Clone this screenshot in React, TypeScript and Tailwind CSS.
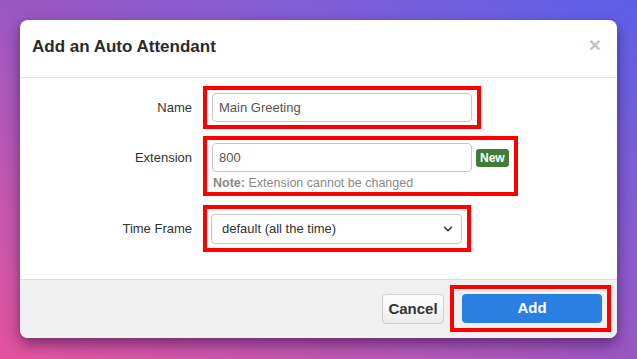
import { ChevronDown } from 'lucide-react'

const font = { fontFamily: '"Liberation Sans", Arial, sans-serif' }

export default function App() {
  return (
    <div
      className="w-full h-[359px] p-[20px] bg-gradient-to-tr from-[#e4529c] via-[#9a57c2] to-[#5a60ea]"
      style={font}
    >
      <div className="w-[597px] h-[318px] bg-white rounded-[8px] shadow-[0_6px_14px_rgba(40,10,60,0.55)] overflow-hidden flex flex-col">
        {/* header */}
        <div className="h-[58px] flex items-center justify-between pl-[12px] pr-[16px] border-b border-[#e5e5e5]">
          <h2 className="text-[17px] font-bold text-[#2b2b2b] mt-[-4px]">Add an Auto Attendant</h2>
          <span className="text-[21px] font-bold text-[#c4c4c4] leading-none mt-[-9px]">×</span>
        </div>

        {/* body */}
        <div className="flex-1 pt-[8px] flex flex-col text-[13px] text-[#333]">
          <div className="flex">
            <div className="w-[172px] text-right mt-[12px] leading-[20px]">Name</div>
            <div className="ml-[11px] border-4 border-[#ff0000] px-[5px] py-[3px] w-[278px]">
              <div className="h-[29px] rounded-[4px] border border-[#c8c8c8] flex items-center px-[6px] text-[#555]">
                Main Greeting
              </div>
            </div>
          </div>

          <div className="flex mt-[7px]">
            <div className="w-[172px] text-right mt-[12px] leading-[20px]">Extension</div>
            <div className="ml-[11px] border-4 border-[#ff0000] pl-[5px] pt-[3px] w-[315px] h-[60px]">
              <div className="flex items-center">
                <div className="w-[260px] h-[29px] rounded-[4px] border border-[#c8c8c8] flex items-center px-[6px] text-[#555]">
                  800
                </div>
                <span className="ml-[4px] h-[18px] px-[4px] rounded-[3px] bg-[#3f7d3b] text-white text-[12px] font-bold flex items-center">
                  New
                </span>
              </div>
              <div className="mt-[3px] pl-[1px] text-[12.5px] text-[#8a8a8a] leading-[16px]">
                <span className="font-bold">Note:</span> Extension cannot be changed
              </div>
            </div>
          </div>

          <div className="flex mt-[9px]">
            <div className="w-[172px] text-right mt-[14px] leading-[20px]">Time Frame</div>
            <div className="ml-[11px] border-4 border-[#ff0000] pl-[4px] pr-[5px] pt-[5px] pb-[4px] w-[268px]">
              <div className="h-[30px] rounded-[4px] border border-[#c8c8c8] flex items-center justify-between pl-[10px] pr-[6px] text-[#333]">
                <span>default (all the time)</span>
                <ChevronDown size={14} strokeWidth={2.6} className="text-[#333]" />
              </div>
            </div>
          </div>
        </div>

        {/* footer */}
        <div className="h-[59px] bg-[#f1f1f1] border-t border-[#dcdcdc] flex items-start justify-end pt-[5px] pr-[6px]">
          <button className="mt-[9px] mr-[6px] w-[62px] h-[30px] rounded-[4px] border border-[#cfcfcf] bg-gradient-to-b from-white to-[#ececec] text-[15px] font-bold text-[#333]">
            Cancel
          </button>
          <div className="border-4 border-[#ff0000] pl-[8px] pr-[5px] pt-[5px] pb-[5px]">
            <button className="w-[140px] h-[29px] rounded-[4px] bg-[#2a7fe2] text-white text-[15px] font-bold">
              Add
            </button>
          </div>
        </div>
      </div>
    </div>
  )
}
